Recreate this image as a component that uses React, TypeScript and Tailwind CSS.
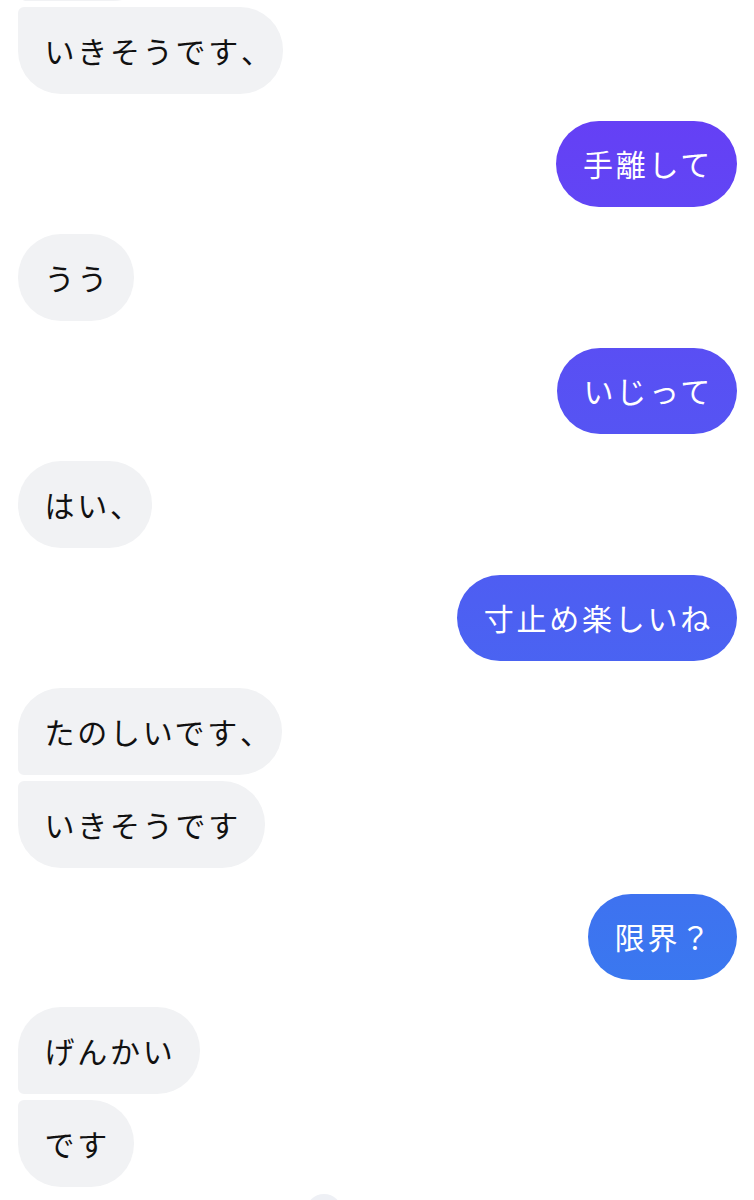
import React from "react";

type Msg = { text: React.ReactNode; me: boolean; corner?: string; mt: string };

const Comma = () => <span className="tracking-[-12px]">、</span>;

const msgs: Msg[] = [
  { text: <>いきそうです<Comma /></>, me: false, corner: "rounded-tl-[6px]", mt: "mt-[6.5px]" },
  { text: "手離して", me: true, mt: "mt-[27px]" },
  { text: "うう", me: false, mt: "mt-[27px]" },
  { text: "いじって", me: true, mt: "mt-[27px]" },
  { text: <>はい<Comma /></>, me: false, mt: "mt-[27px]" },
  { text: "寸止め楽しいね", me: true, mt: "mt-[27px]" },
  { text: <>たのしいです<Comma /></>, me: false, corner: "rounded-bl-[6px]", mt: "mt-[27px]" },
  { text: "いきそうです", me: false, corner: "rounded-tl-[6px]", mt: "mt-[6.5px]" },
  { text: "限界？", me: true, mt: "mt-[26px]" },
  { text: "げんかい", me: false, corner: "rounded-bl-[6px]", mt: "mt-[27px]" },
  { text: "です", me: false, corner: "rounded-tl-[6px]", mt: "mt-[6.5px]" },
];

export default function App() {
  return (
    <div
      className="w-[754px] h-[1200px] overflow-hidden bg-white flex flex-col"
      style={{ fontFamily: '"Noto Sans CJK JP", "Noto Sans", sans-serif' }}
    >
      <div className="pl-[20px] mt-[-86px] flex">
        <div className="h-[86.5px] w-[136px] rounded-[43px] rounded-bl-[6px] bg-[#f1f2f4]" />
      </div>
      {msgs.map((m, i) => (
        <div
          key={i}
          className={`flex ${m.me ? "justify-end pr-[17px]" : "justify-start pl-[18px]"} ${m.mt}`}
        >
          <div
            className={`h-[86.5px] shrink-0 flex items-center pl-[26.5px] pr-[24px] rounded-[43px] text-[30px] tracking-[2.75px] whitespace-nowrap ${
              m.me
                ? "bg-fixed bg-linear-to-b/srgb from-[#6b38f6] to-[#2f86ee] text-white"
                : "bg-[#f1f2f4] text-[#111111]"
            } ${m.corner ?? ""}`}
          >
            {m.text}
          </div>
        </div>
      ))}
      <div className="mt-[7px] ml-[306px] w-[36px] h-[36px] shrink-0 rounded-full bg-[#eef0f5]" />
    </div>
  );
}
